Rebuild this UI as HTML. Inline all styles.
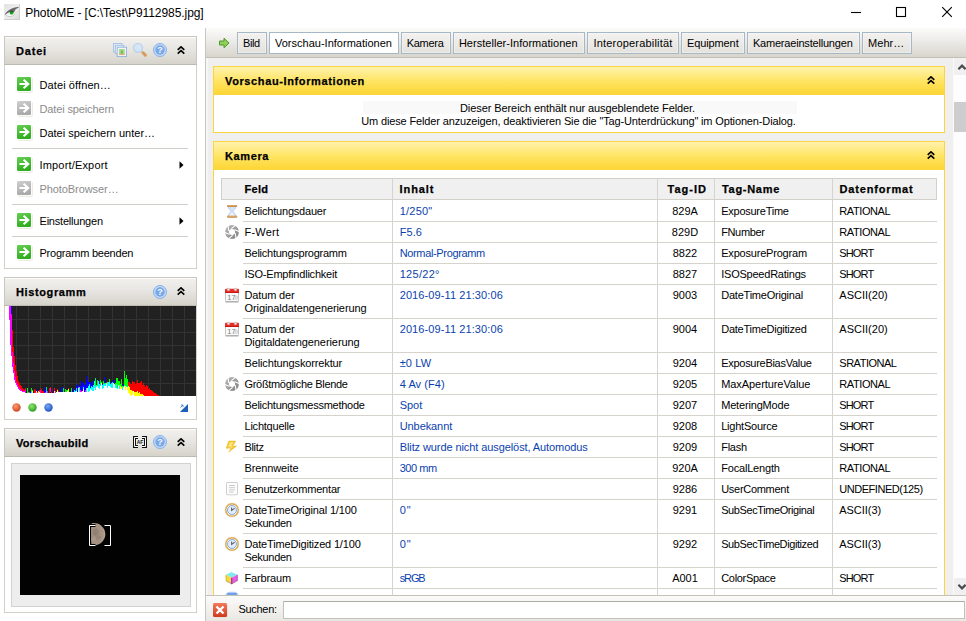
<!DOCTYPE html>
<html lang="de"><head><meta charset="utf-8"><title>PhotoME</title><style>
*{box-sizing:border-box;margin:0;padding:0}
html,body{width:966px;height:621px;overflow:hidden;background:#fff}
body{position:relative;font-family:"Liberation Sans",sans-serif;font-size:11px;color:#000;line-height:13px}
.abs{position:absolute}
.t{position:absolute;white-space:nowrap}
.b{font-weight:bold;-webkit-text-stroke:.25px #000}
#title{left:25.300px;top:5px;font-size:12px;line-height:16px;letter-spacing:-0.07px}
.ph{position:absolute;left:4px;width:193px;height:29px;border:1px solid #c9c6bd;border-bottom-color:#bdbab1;background:linear-gradient(#f2f1ee,#e8e6e2 45%,#d6d3cb);box-shadow:inset 0 1px 0 rgba(255,255,255,.8)}
.ph .t{left:11px;top:8px;font-weight:bold;-webkit-text-stroke:.25px #000}
.pb{position:absolute;left:4px;width:193px;border:1px solid #d3d0c9;border-top:0;background:#fff}
.mi{position:absolute;left:39.500px;white-space:nowrap}
.dis{color:#8c8c8c}
.sep{position:absolute;left:12px;width:176px;height:1px;background:#d0cec8}
#rp{left:205px;top:28px;width:761px;height:593px;background:#efefef;border-left:1px solid #c8c6c0}
#tabbar{left:206px;top:28px;width:760px;height:30px;background:linear-gradient(#fbfbfa,#eeedea 40%,#d8d5cd);border-bottom:1px solid #c2bfb6}
.tab{position:absolute;top:32px;height:22px;border:1px solid #a6b7c5;background:linear-gradient(#f3f2f0,#e4e2dd);box-shadow:inset 0 0 0 1px rgba(255,255,255,.35);text-align:center;line-height:20px;white-space:nowrap}
.tab.act{background:#fff}
.sec{position:absolute;left:213px;width:732px;border:1px solid #fbd43c;border-top:0;background:#fff}
.sech{position:absolute;left:213px;width:732px;height:29px;border:1px solid #fbd53f;background:linear-gradient(#fff2ad,#ffe566 50%,#fdd636);}
.sech .t{left:11px;top:8px;font-weight:bold;-webkit-text-stroke:.25px #000}
#search{left:206px;top:595px;width:760px;height:26px;background:linear-gradient(#fbfbfa,#e9e7e2);border-top:1px solid #c5c2ba}
.hl{position:absolute;height:1px;background:#d6d3cd;left:243px;width:694px}
.vl{position:absolute;width:1px;background:#d6d3cd;top:178px;height:417px}
.c1{left:244.500px}.c2{left:399.700px;color:#0b3fae}.c3{left:657px;width:56px;text-align:center}.c4{left:721.200px}.c5{left:839.300px}
</style></head><body>
<svg class="abs" style="left:4px;top:4px" width="16" height="16" viewBox="0 0 16 16"><defs><linearGradient id="eyebg" x1="0" y1="0" x2="1" y2="1"><stop offset="0" stop-color="#e2e2e2"/><stop offset=".5" stop-color="#eeeeee"/><stop offset="1" stop-color="#d9d9d9"/></linearGradient></defs><rect width="16" height="16" fill="url(#eyebg)"/><path d="M15.500 0V16M0 15.500H16" stroke="#cfcfcf" stroke-width="1"/><path d="M2 10.800C4 12.800,9 13,11.500 9.500C9 10.800,5 11,2 10.800z" fill="#f8f8f8"/><path d="M1.300 10.600C3.500 6.500,8 4.600,14.300 3.600C11.500 4.800,10.500 6.500,10.300 8.500C8 7,4.500 8,1.300 10.600z" fill="#6a6d6a"/><path d="M1.300 10.600C3.500 6.500,8 4.300,14.500 3.500" stroke="#4b4b4b" stroke-width=".9" fill="none"/><path d="M4.500 7.300C7 5,10 4,13.500 3.200" stroke="#8a7a8a" stroke-width=".6" fill="none"/><circle cx="7.600" cy="8.700" r="1.900" fill="#18a818"/><path d="M5.700 8.200A1.900 1.900 0 0 1 9.500 8.200z" fill="#2f5a35"/><path d="M1.500 11C4 13.200,8.500 13.300,11 10" stroke="#bdbdbd" stroke-width=".7" fill="none"/></svg>
<div class="t" id="title">PhotoME - [C:\Test\P9112985.jpg]</div>
<svg class="abs" style="left:840px;top:0" width="126" height="28" viewBox="0 0 126 28"><path d="M11 12.500h10" stroke="#000" stroke-width="1.100"/><rect x="56.500" y="7.500" width="9" height="9" fill="none" stroke="#000" stroke-width="1.100"/><path d="M102.200 7.200l9.600 9.600M111.800 7.200L102.200 16.800" stroke="#000" stroke-width="1.150"/></svg>
<div class="ph" style="top:36px"><div class="t" style="letter-spacing:0.819px">Datei</div></div>
<div class="pb" style="top:65px;height:204px"></div>
<svg class="abs" style="left:113px;top:43px;opacity:.75" width="14" height="14" viewBox="0 0 15 15"><rect x="0.5" y="0.5" width="9" height="9" fill="#e4eefb" stroke="#8fb4e6"/><rect x="2.5" y="2.5" width="9" height="9" fill="#e4eefb" stroke="#8fb4e6"/><rect x="4.5" y="4.5" width="10" height="10" fill="#f3f8ff" stroke="#7aa6e0"/><rect x="6.5" y="6.5" width="6" height="6" fill="#8ed36d"/><rect x="8.5" y="8" width="2" height="4" fill="#4fae36"/><rect x="6.5" y="11.5" width="6" height="1.4" fill="#e8a05a"/></svg>
<svg class="abs" style="left:132px;top:42px;opacity:.85" width="16" height="16" viewBox="0 0 16 16"><path d="M9 9L11 11" stroke="#c9d6e6" stroke-width="2"/><path d="M11 10.800L13.300 13.100" stroke="#d58f48" stroke-width="3" stroke-linecap="round"/><circle cx="6" cy="5.800" r="4.500" fill="#d3e5fa" stroke="#b3cff0" stroke-width="1.300"/></svg>
<svg class="abs" style="left:153px;top:43px" width="14" height="14" viewBox="0 0 14 14"><circle cx="7" cy="7" r="6.5" fill="#c3d8f5" stroke="#86b0ea" stroke-width="1"/><circle cx="7" cy="7" r="4.700" fill="#78a8e6"/><text x="7" y="10.200" font-family="Liberation Sans" font-weight="bold" font-size="9" fill="#f4f8ff" text-anchor="middle">?</text></svg>
<svg class="abs" style="left:177px;top:45.7px" width="8" height="9" viewBox="0 0 8 9"><path d="M0.700 3.900L4 0.800L7.300 3.900M0.700 7.700L4 4.600L7.300 7.700" fill="none" stroke="#000" stroke-width="1.600"/></svg>
<svg class="abs" style="left:16px;top:76px" width="17" height="17" viewBox="0 0 17 17"><defs><linearGradient id="gg76" x1="0" y1="0" x2="0.300" y2="1"><stop offset="0" stop-color="#66cf52"/><stop offset="1" stop-color="#30ad20"/></linearGradient></defs><rect x="1.500" y="1.500" width="15" height="15" rx="1.500" fill="#ddd8cc"/><rect x="1" y="1" width="15" height="15" rx="1" fill="#fbfbf8"/><rect x="1" y="1" width="14" height="14" rx="1.200" fill="url(#gg76)"/><path d="M3.400 8H12M7.600 3.800L12.200 8L7.600 12.200" fill="none" stroke="#fff" stroke-width="2.100"/></svg>
<div class="mi" style="top:79px;letter-spacing:0.1px">Datei öffnen…</div>
<svg class="abs" style="left:16px;top:100px" width="17" height="17" viewBox="0 0 17 17"><defs><linearGradient id="gd100" x1="0" y1="0" x2="0.300" y2="1"><stop offset="0" stop-color="#cfcfcf"/><stop offset="1" stop-color="#a9a9a9"/></linearGradient></defs><rect x="1.500" y="1.500" width="15" height="15" rx="1.500" fill="#ddd8cc"/><rect x="1" y="1" width="15" height="15" rx="1" fill="#fbfbf8"/><rect x="1" y="1" width="14" height="14" rx="1.200" fill="url(#gd100)"/><path d="M3.400 8H12M7.600 3.800L12.200 8L7.600 12.200" fill="none" stroke="#fff" stroke-width="2.100"/></svg>
<div class="mi dis" style="top:103px;letter-spacing:-0.13px">Datei speichern</div>
<svg class="abs" style="left:16px;top:124px" width="17" height="17" viewBox="0 0 17 17"><defs><linearGradient id="gg124" x1="0" y1="0" x2="0.300" y2="1"><stop offset="0" stop-color="#66cf52"/><stop offset="1" stop-color="#30ad20"/></linearGradient></defs><rect x="1.500" y="1.500" width="15" height="15" rx="1.500" fill="#ddd8cc"/><rect x="1" y="1" width="15" height="15" rx="1" fill="#fbfbf8"/><rect x="1" y="1" width="14" height="14" rx="1.200" fill="url(#gg124)"/><path d="M3.400 8H12M7.600 3.800L12.200 8L7.600 12.200" fill="none" stroke="#fff" stroke-width="2.100"/></svg>
<div class="mi" style="top:127px;letter-spacing:0px">Datei speichern unter…</div>
<svg class="abs" style="left:16px;top:156px" width="17" height="17" viewBox="0 0 17 17"><defs><linearGradient id="gg156" x1="0" y1="0" x2="0.300" y2="1"><stop offset="0" stop-color="#66cf52"/><stop offset="1" stop-color="#30ad20"/></linearGradient></defs><rect x="1.500" y="1.500" width="15" height="15" rx="1.500" fill="#ddd8cc"/><rect x="1" y="1" width="15" height="15" rx="1" fill="#fbfbf8"/><rect x="1" y="1" width="14" height="14" rx="1.200" fill="url(#gg156)"/><path d="M3.400 8H12M7.600 3.800L12.200 8L7.600 12.200" fill="none" stroke="#fff" stroke-width="2.100"/></svg>
<div class="mi" style="top:159px;letter-spacing:0.17px">Import/Export</div>
<svg class="abs" style="left:16px;top:180px" width="17" height="17" viewBox="0 0 17 17"><defs><linearGradient id="gd180" x1="0" y1="0" x2="0.300" y2="1"><stop offset="0" stop-color="#cfcfcf"/><stop offset="1" stop-color="#a9a9a9"/></linearGradient></defs><rect x="1.500" y="1.500" width="15" height="15" rx="1.500" fill="#ddd8cc"/><rect x="1" y="1" width="15" height="15" rx="1" fill="#fbfbf8"/><rect x="1" y="1" width="14" height="14" rx="1.200" fill="url(#gd180)"/><path d="M3.400 8H12M7.600 3.800L12.200 8L7.600 12.200" fill="none" stroke="#fff" stroke-width="2.100"/></svg>
<div class="mi dis" style="top:183px;letter-spacing:-0.08px">PhotoBrowser…</div>
<svg class="abs" style="left:16px;top:212px" width="17" height="17" viewBox="0 0 17 17"><defs><linearGradient id="gg212" x1="0" y1="0" x2="0.300" y2="1"><stop offset="0" stop-color="#66cf52"/><stop offset="1" stop-color="#30ad20"/></linearGradient></defs><rect x="1.500" y="1.500" width="15" height="15" rx="1.500" fill="#ddd8cc"/><rect x="1" y="1" width="15" height="15" rx="1" fill="#fbfbf8"/><rect x="1" y="1" width="14" height="14" rx="1.200" fill="url(#gg212)"/><path d="M3.400 8H12M7.600 3.800L12.200 8L7.600 12.200" fill="none" stroke="#fff" stroke-width="2.100"/></svg>
<div class="mi" style="top:215px;letter-spacing:-0.21px">Einstellungen</div>
<svg class="abs" style="left:16px;top:244px" width="17" height="17" viewBox="0 0 17 17"><defs><linearGradient id="gg244" x1="0" y1="0" x2="0.300" y2="1"><stop offset="0" stop-color="#66cf52"/><stop offset="1" stop-color="#30ad20"/></linearGradient></defs><rect x="1.500" y="1.500" width="15" height="15" rx="1.500" fill="#ddd8cc"/><rect x="1" y="1" width="15" height="15" rx="1" fill="#fbfbf8"/><rect x="1" y="1" width="14" height="14" rx="1.200" fill="url(#gg244)"/><path d="M3.400 8H12M7.600 3.800L12.200 8L7.600 12.200" fill="none" stroke="#fff" stroke-width="2.100"/></svg>
<div class="mi" style="top:247px;letter-spacing:-0.22px">Programm beenden</div>
<div class="sep" style="top:148px"></div>
<div class="sep" style="top:204px"></div>
<div class="sep" style="top:236px"></div>
<svg class="abs" style="left:179px;top:161px" width="5" height="8" viewBox="0 0 5 8"><path d="M0.5 0.3L4.5 4L0.5 7.7z" fill="#000"/></svg>
<svg class="abs" style="left:179px;top:217px" width="5" height="8" viewBox="0 0 5 8"><path d="M0.5 0.3L4.5 4L0.5 7.7z" fill="#000"/></svg>
<div class="ph" style="top:277px"><div class="t" style="letter-spacing:0.621px">Histogramm</div></div>
<div class="pb" style="top:306px;height:114px"></div>
<svg class="abs" style="left:153px;top:285px" width="14" height="14" viewBox="0 0 14 14"><circle cx="7" cy="7" r="6.5" fill="#c3d8f5" stroke="#86b0ea" stroke-width="1"/><circle cx="7" cy="7" r="4.700" fill="#78a8e6"/><text x="7" y="10.200" font-family="Liberation Sans" font-weight="bold" font-size="9" fill="#f4f8ff" text-anchor="middle">?</text></svg>
<svg class="abs" style="left:177px;top:286.7px" width="8" height="9" viewBox="0 0 8 9"><path d="M0.700 3.900L4 0.800L7.300 3.900M0.700 7.700L4 4.600L7.300 7.700" fill="none" stroke="#000" stroke-width="1.600"/></svg>
<svg class="abs" style="left:5px;top:306px" width="191" height="90" viewBox="0 0 191 90" shape-rendering="crispEdges"><rect width="191" height="90" fill="#212121"/><path d="M11.5 0V90M23.5 0V90M35.5 0V90M47.5 0V90M59.5 0V90M71.5 0V90M83.5 0V90M95.5 0V90M107.5 0V90M119.5 0V90M131.5 0V90M143.5 0V90M155.5 0V90M167.5 0V90M179.5 0V90M0 13.5H191M0 26.5H191M0 39.5H191M0 52.5H191M0 64.5H191M0 77.5H191" stroke="#333333" stroke-width="1" fill="none"/><rect x="0" y="0.0" width="1" height="90.0" fill="#ffffff"/><rect x="1" y="0.0" width="1" height="90.0" fill="#ffffff"/><rect x="2" y="0.0" width="1" height="90.0" fill="#ffffff"/><rect x="3" y="0.0" width="1" height="90.0" fill="#ffffff"/><rect x="4" y="14.0" width="1" height="76.0" fill="#ffffff"/><rect x="4" y="0.0" width="1" height="14.0" fill="#ff00ff"/><rect x="5" y="39.0" width="1" height="51.0" fill="#ffffff"/><rect x="5" y="0.0" width="1" height="39.0" fill="#ff00ff"/><rect x="6" y="50.0" width="1" height="40.0" fill="#ffffff"/><rect x="6" y="8.4" width="1" height="41.6" fill="#ff00ff"/><rect x="6" y="0.0" width="1" height="8.4" fill="#0000ff"/><rect x="7" y="61.0" width="1" height="29.0" fill="#ffffff"/><rect x="7" y="45.6" width="1" height="15.4" fill="#ff00ff"/><rect x="7" y="24.0" width="1" height="21.6" fill="#ff0000"/><rect x="8" y="67.0" width="1" height="23.0" fill="#ffffff"/><rect x="8" y="56.6" width="1" height="10.4" fill="#ff00ff"/><rect x="8" y="41.2" width="1" height="15.4" fill="#ff0000"/><rect x="9" y="74.0" width="1" height="16.0" fill="#ffffff"/><rect x="9" y="64.6" width="1" height="9.4" fill="#ff00ff"/><rect x="9" y="50.0" width="1" height="14.6" fill="#ff0000"/><rect x="10" y="77.0" width="1" height="13.0" fill="#ffffff"/><rect x="10" y="71.2" width="1" height="5.8" fill="#ff00ff"/><rect x="10" y="58.8" width="1" height="12.4" fill="#ff0000"/><rect x="11" y="79.0" width="1" height="11.0" fill="#ffffff"/><rect x="11" y="75.8" width="1" height="3.2" fill="#ff00ff"/><rect x="11" y="64.6" width="1" height="11.2" fill="#ff0000"/><rect x="12" y="81.0" width="1" height="9.0" fill="#ffffff"/><rect x="12" y="78.2" width="1" height="2.8" fill="#ff00ff"/><rect x="12" y="69.8" width="1" height="8.4" fill="#ff0000"/><rect x="13" y="82.5" width="1" height="7.5" fill="#ffffff"/><rect x="13" y="80.2" width="1" height="2.3" fill="#ff00ff"/><rect x="13" y="74.6" width="1" height="5.6" fill="#ff0000"/><rect x="14" y="83.5" width="1" height="6.5" fill="#ffffff"/><rect x="14" y="81.9" width="1" height="1.6" fill="#ff00ff"/><rect x="14" y="77.0" width="1" height="4.9" fill="#ff0000"/><rect x="15" y="84.5" width="1" height="5.5" fill="#ffffff"/><rect x="15" y="83.1" width="1" height="1.4" fill="#ff00ff"/><rect x="15" y="78.6" width="1" height="4.5" fill="#ff0000"/><rect x="16" y="85.0" width="1" height="5.0" fill="#ffffff"/><rect x="16" y="84.1" width="1" height="0.9" fill="#ff00ff"/><rect x="16" y="80.2" width="1" height="3.9" fill="#ff0000"/><rect x="17" y="85.5" width="1" height="4.5" fill="#ffffff"/><rect x="17" y="84.8" width="1" height="0.7" fill="#ff00ff"/><rect x="17" y="81.6" width="1" height="3.2" fill="#ff0000"/><rect x="18" y="85.8" width="1" height="4.2" fill="#ffffff"/><rect x="18" y="85.3" width="1" height="0.5" fill="#ff00ff"/><rect x="18" y="82.7" width="1" height="2.6" fill="#ff0000"/><rect x="19" y="85.9" width="1" height="4.1" fill="#ffffff"/><rect x="19" y="85.4" width="1" height="0.5" fill="#ff00ff"/><rect x="19" y="83.5" width="1" height="1.9" fill="#ff0000"/><rect x="20" y="86.9" width="1" height="3.1" fill="#ffffff"/><rect x="20" y="83.4" width="1" height="3.5" fill="#ff00ff"/><rect x="20" y="81.6" width="1" height="1.8" fill="#ff0000"/><rect x="21" y="86.9" width="1" height="3.1" fill="#ffffff"/><rect x="22" y="86.8" width="1" height="3.2" fill="#ffffff"/><rect x="22" y="82.3" width="1" height="4.5" fill="#00ff00"/><rect x="23" y="86.8" width="1" height="3.2" fill="#ffffff"/><rect x="23" y="86.7" width="1" height="0.1" fill="#ffff00"/><rect x="23" y="85.9" width="1" height="0.8" fill="#00ff00"/><rect x="24" y="86.8" width="1" height="3.2" fill="#ffffff"/><rect x="24" y="86.3" width="1" height="0.5" fill="#ff00ff"/><rect x="24" y="86.0" width="1" height="0.3" fill="#ff0000"/><rect x="25" y="86.8" width="1" height="3.2" fill="#ffffff"/><rect x="25" y="85.1" width="1" height="1.7" fill="#0000ff"/><rect x="26" y="86.8" width="1" height="3.2" fill="#ffffff"/><rect x="26" y="85.7" width="1" height="1.1" fill="#00ffff"/><rect x="26" y="81.5" width="1" height="4.2" fill="#00ff00"/><rect x="27" y="86.7" width="1" height="3.3" fill="#ffffff"/><rect x="27" y="85.4" width="1" height="1.4" fill="#ffff00"/><rect x="27" y="83.5" width="1" height="1.8" fill="#00ff00"/><rect x="28" y="86.7" width="1" height="3.3" fill="#ffffff"/><rect x="29" y="86.7" width="1" height="3.3" fill="#ffffff"/><rect x="29" y="82.7" width="1" height="4.1" fill="#ff0000"/><rect x="30" y="86.7" width="1" height="3.3" fill="#ffffff"/><rect x="30" y="86.3" width="1" height="0.4" fill="#ff00ff"/><rect x="30" y="84.3" width="1" height="2.0" fill="#ff0000"/><rect x="31" y="86.7" width="1" height="3.3" fill="#ffffff"/><rect x="31" y="85.4" width="1" height="1.3" fill="#ffff00"/><rect x="31" y="84.8" width="1" height="0.6" fill="#00ff00"/><rect x="32" y="86.7" width="1" height="3.3" fill="#ffffff"/><rect x="32" y="86.1" width="1" height="0.6" fill="#ff00ff"/><rect x="32" y="83.0" width="1" height="3.1" fill="#0000ff"/><rect x="33" y="86.7" width="1" height="3.3" fill="#ffffff"/><rect x="33" y="85.1" width="1" height="1.5" fill="#ffff00"/><rect x="33" y="84.7" width="1" height="0.5" fill="#00ff00"/><rect x="34" y="86.2" width="1" height="3.8" fill="#ffffff"/><rect x="34" y="84.6" width="1" height="1.6" fill="#ff00ff"/><rect x="34" y="83.8" width="1" height="0.7" fill="#ff0000"/><rect x="35" y="86.6" width="1" height="3.4" fill="#ffffff"/><rect x="35" y="83.5" width="1" height="3.2" fill="#ff00ff"/><rect x="35" y="81.6" width="1" height="1.8" fill="#ff0000"/><rect x="36" y="86.6" width="1" height="3.4" fill="#ffffff"/><rect x="36" y="83.3" width="1" height="3.3" fill="#ff0000"/><rect x="37" y="86.6" width="1" height="3.4" fill="#ffffff"/><rect x="37" y="85.0" width="1" height="1.6" fill="#ff0000"/><rect x="38" y="86.6" width="1" height="3.4" fill="#ffffff"/><rect x="38" y="84.6" width="1" height="2.0" fill="#ff0000"/><rect x="39" y="86.6" width="1" height="3.4" fill="#ffffff"/><rect x="39" y="84.4" width="1" height="2.1" fill="#0000ff"/><rect x="40" y="86.5" width="1" height="3.5" fill="#ffffff"/><rect x="40" y="86.4" width="1" height="0.2" fill="#ff00ff"/><rect x="40" y="80.8" width="1" height="5.6" fill="#0000ff"/><rect x="41" y="86.5" width="1" height="3.5" fill="#ffffff"/><rect x="41" y="85.2" width="1" height="1.3" fill="#00ffff"/><rect x="41" y="81.3" width="1" height="3.9" fill="#00ff00"/><rect x="42" y="86.5" width="1" height="3.5" fill="#ffffff"/><rect x="42" y="85.3" width="1" height="1.2" fill="#ff00ff"/><rect x="42" y="81.5" width="1" height="3.9" fill="#0000ff"/><rect x="43" y="86.5" width="1" height="3.5" fill="#ffffff"/><rect x="44" y="86.5" width="1" height="3.5" fill="#ffffff"/><rect x="44" y="82.0" width="1" height="4.5" fill="#ff0000"/><rect x="45" y="86.5" width="1" height="3.5" fill="#ffffff"/><rect x="45" y="82.1" width="1" height="4.3" fill="#ff00ff"/><rect x="45" y="80.7" width="1" height="1.5" fill="#ff0000"/><rect x="46" y="86.5" width="1" height="3.5" fill="#ffffff"/><rect x="46" y="85.7" width="1" height="0.8" fill="#ff0000"/><rect x="47" y="86.5" width="1" height="3.5" fill="#ffffff"/><rect x="47" y="85.7" width="1" height="0.8" fill="#0000ff"/><rect x="48" y="86.5" width="1" height="3.5" fill="#ffffff"/><rect x="49" y="86.4" width="1" height="3.6" fill="#ffffff"/><rect x="49" y="85.1" width="1" height="1.4" fill="#ffff00"/><rect x="49" y="81.5" width="1" height="3.6" fill="#ff0000"/><rect x="50" y="86.4" width="1" height="3.6" fill="#ffffff"/><rect x="50" y="84.9" width="1" height="1.6" fill="#ff00ff"/><rect x="50" y="84.3" width="1" height="0.6" fill="#0000ff"/><rect x="51" y="86.4" width="1" height="3.6" fill="#ffffff"/><rect x="52" y="86.4" width="1" height="3.6" fill="#ffffff"/><rect x="52" y="84.0" width="1" height="2.4" fill="#ffff00"/><rect x="52" y="83.3" width="1" height="0.7" fill="#ff0000"/><rect x="53" y="86.4" width="1" height="3.6" fill="#ffffff"/><rect x="53" y="85.4" width="1" height="1.0" fill="#ff0000"/><rect x="54" y="86.4" width="1" height="3.6" fill="#ffffff"/><rect x="54" y="84.9" width="1" height="1.5" fill="#0000ff"/><rect x="55" y="86.4" width="1" height="3.6" fill="#ffffff"/><rect x="55" y="80.9" width="1" height="5.5" fill="#0000ff"/><rect x="56" y="86.4" width="1" height="3.6" fill="#ffffff"/><rect x="57" y="86.4" width="1" height="3.6" fill="#ffffff"/><rect x="57" y="80.7" width="1" height="5.7" fill="#0000ff"/><rect x="58" y="86.4" width="1" height="3.6" fill="#ffffff"/><rect x="58" y="85.7" width="1" height="0.7" fill="#00ffff"/><rect x="58" y="81.8" width="1" height="3.9" fill="#00ff00"/><rect x="59" y="86.4" width="1" height="3.6" fill="#ffffff"/><rect x="59" y="86.0" width="1" height="0.4" fill="#ff0000"/><rect x="60" y="86.4" width="1" height="3.6" fill="#ffffff"/><rect x="60" y="82.8" width="1" height="3.6" fill="#00ff00"/><rect x="61" y="86.4" width="1" height="3.6" fill="#ffffff"/><rect x="61" y="84.2" width="1" height="2.2" fill="#00ff00"/><rect x="62" y="85.4" width="1" height="4.6" fill="#ffffff"/><rect x="62" y="85.2" width="1" height="0.2" fill="#00ffff"/><rect x="62" y="83.6" width="1" height="1.7" fill="#00ff00"/><rect x="63" y="86.3" width="1" height="3.7" fill="#ffffff"/><rect x="63" y="83.4" width="1" height="2.9" fill="#ffff00"/><rect x="63" y="82.1" width="1" height="1.3" fill="#ff0000"/><rect x="64" y="86.4" width="1" height="3.6" fill="#ffffff"/><rect x="65" y="86.4" width="1" height="3.6" fill="#ffffff"/><rect x="65" y="85.8" width="1" height="0.6" fill="#ff00ff"/><rect x="65" y="84.8" width="1" height="1.0" fill="#0000ff"/><rect x="66" y="86.4" width="1" height="3.6" fill="#ffffff"/><rect x="66" y="81.9" width="1" height="4.5" fill="#00ff00"/><rect x="67" y="86.4" width="1" height="3.6" fill="#ffffff"/><rect x="67" y="85.9" width="1" height="0.5" fill="#00ffff"/><rect x="67" y="82.3" width="1" height="3.6" fill="#0000ff"/><rect x="68" y="86.4" width="1" height="3.6" fill="#ffffff"/><rect x="69" y="86.4" width="1" height="3.6" fill="#ffffff"/><rect x="69" y="84.3" width="1" height="2.1" fill="#00ffff"/><rect x="69" y="83.9" width="1" height="0.4" fill="#00ff00"/><rect x="70" y="86.4" width="1" height="3.6" fill="#ffffff"/><rect x="70" y="85.1" width="1" height="1.3" fill="#00ffff"/><rect x="70" y="82.9" width="1" height="2.2" fill="#0000ff"/><rect x="71" y="84.5" width="1" height="5.5" fill="#ffffff"/><rect x="71" y="82.2" width="1" height="2.3" fill="#00ffff"/><rect x="71" y="79.8" width="1" height="2.4" fill="#0000ff"/><rect x="72" y="86.4" width="1" height="3.6" fill="#ffffff"/><rect x="72" y="86.3" width="1" height="0.1" fill="#ff00ff"/><rect x="72" y="78.3" width="1" height="8.0" fill="#0000ff"/><rect x="73" y="81.9" width="1" height="8.1" fill="#ffffff"/><rect x="73" y="81.0" width="1" height="0.9" fill="#ff00ff"/><rect x="73" y="80.8" width="1" height="0.2" fill="#ff0000"/><rect x="74" y="86.3" width="1" height="3.7" fill="#ffffff"/><rect x="74" y="80.9" width="1" height="5.4" fill="#00ffff"/><rect x="74" y="79.4" width="1" height="1.6" fill="#0000ff"/><rect x="75" y="86.0" width="1" height="4.0" fill="#ffffff"/><rect x="75" y="83.9" width="1" height="2.1" fill="#ff00ff"/><rect x="75" y="79.7" width="1" height="4.2" fill="#0000ff"/><rect x="76" y="86.3" width="1" height="3.7" fill="#ffffff"/><rect x="76" y="85.3" width="1" height="1.0" fill="#ff00ff"/><rect x="76" y="75.1" width="1" height="10.2" fill="#0000ff"/><rect x="77" y="85.4" width="1" height="4.6" fill="#ffffff"/><rect x="77" y="84.5" width="1" height="0.9" fill="#ff00ff"/><rect x="77" y="76.5" width="1" height="8.0" fill="#0000ff"/><rect x="78" y="82.9" width="1" height="7.1" fill="#ffffff"/><rect x="78" y="80.9" width="1" height="2.0" fill="#00ffff"/><rect x="78" y="75.9" width="1" height="5.0" fill="#0000ff"/><rect x="79" y="86.1" width="1" height="3.9" fill="#ffffff"/><rect x="79" y="79.0" width="1" height="7.2" fill="#0000ff"/><rect x="80" y="85.9" width="1" height="4.1" fill="#ffffff"/><rect x="80" y="83.7" width="1" height="2.3" fill="#ff00ff"/><rect x="80" y="78.0" width="1" height="5.6" fill="#0000ff"/><rect x="81" y="86.0" width="1" height="4.0" fill="#ffffff"/><rect x="81" y="81.9" width="1" height="4.1" fill="#00ffff"/><rect x="81" y="70.2" width="1" height="11.7" fill="#0000ff"/><rect x="82" y="82.0" width="1" height="8.0" fill="#ffffff"/><rect x="82" y="81.8" width="1" height="0.2" fill="#00ffff"/><rect x="82" y="74.3" width="1" height="7.5" fill="#0000ff"/><rect x="83" y="85.8" width="1" height="4.2" fill="#ffffff"/><rect x="83" y="79.5" width="1" height="6.3" fill="#00ffff"/><rect x="83" y="76.3" width="1" height="3.2" fill="#0000ff"/><rect x="84" y="85.4" width="1" height="4.6" fill="#ffffff"/><rect x="84" y="77.6" width="1" height="7.8" fill="#00ffff"/><rect x="84" y="75.8" width="1" height="1.8" fill="#0000ff"/><rect x="85" y="82.5" width="1" height="7.5" fill="#ffffff"/><rect x="85" y="81.7" width="1" height="0.8" fill="#00ffff"/><rect x="85" y="76.2" width="1" height="5.5" fill="#0000ff"/><rect x="86" y="83.8" width="1" height="6.2" fill="#ffffff"/><rect x="86" y="79.8" width="1" height="4.0" fill="#00ffff"/><rect x="86" y="76.8" width="1" height="3.0" fill="#0000ff"/><rect x="87" y="85.1" width="1" height="4.9" fill="#ffffff"/><rect x="87" y="80.6" width="1" height="4.5" fill="#00ffff"/><rect x="87" y="74.7" width="1" height="5.9" fill="#0000ff"/><rect x="88" y="84.9" width="1" height="5.1" fill="#ffffff"/><rect x="88" y="78.6" width="1" height="6.3" fill="#00ffff"/><rect x="88" y="78.5" width="1" height="0.1" fill="#0000ff"/><rect x="89" y="81.6" width="1" height="8.4" fill="#ffffff"/><rect x="89" y="74.9" width="1" height="6.7" fill="#00ffff"/><rect x="89" y="73.2" width="1" height="1.6" fill="#0000ff"/><rect x="90" y="84.4" width="1" height="5.6" fill="#ffffff"/><rect x="90" y="79.7" width="1" height="4.7" fill="#00ffff"/><rect x="90" y="71.8" width="1" height="7.9" fill="#00ff00"/><rect x="91" y="80.7" width="1" height="9.3" fill="#ffffff"/><rect x="91" y="79.0" width="1" height="1.7" fill="#00ffff"/><rect x="91" y="78.6" width="1" height="0.4" fill="#00ff00"/><rect x="92" y="79.9" width="1" height="10.1" fill="#ffffff"/><rect x="92" y="79.7" width="1" height="0.2" fill="#ffff00"/><rect x="92" y="73.5" width="1" height="6.2" fill="#00ff00"/><rect x="93" y="81.8" width="1" height="8.2" fill="#ffffff"/><rect x="93" y="75.2" width="1" height="6.6" fill="#00ffff"/><rect x="93" y="73.6" width="1" height="1.7" fill="#0000ff"/><rect x="94" y="83.3" width="1" height="6.7" fill="#ffffff"/><rect x="94" y="78.3" width="1" height="5.1" fill="#00ffff"/><rect x="94" y="76.1" width="1" height="2.2" fill="#0000ff"/><rect x="95" y="79.5" width="1" height="10.5" fill="#ffffff"/><rect x="95" y="79.4" width="1" height="0.1" fill="#00ffff"/><rect x="95" y="73.9" width="1" height="5.5" fill="#00ff00"/><rect x="96" y="77.2" width="1" height="12.8" fill="#ffffff"/><rect x="96" y="76.5" width="1" height="0.7" fill="#00ffff"/><rect x="96" y="75.5" width="1" height="1.0" fill="#00ff00"/><rect x="97" y="82.5" width="1" height="7.5" fill="#ffffff"/><rect x="97" y="78.8" width="1" height="3.7" fill="#00ffff"/><rect x="97" y="77.8" width="1" height="1.0" fill="#0000ff"/><rect x="98" y="82.3" width="1" height="7.7" fill="#ffffff"/><rect x="98" y="78.4" width="1" height="3.9" fill="#00ffff"/><rect x="98" y="74.7" width="1" height="3.6" fill="#00ff00"/><rect x="99" y="80.0" width="1" height="10.0" fill="#ffffff"/><rect x="99" y="77.9" width="1" height="2.1" fill="#00ffff"/><rect x="99" y="77.4" width="1" height="0.5" fill="#00ff00"/><rect x="100" y="79.5" width="1" height="10.5" fill="#ffffff"/><rect x="100" y="76.6" width="1" height="2.9" fill="#00ffff"/><rect x="100" y="71.2" width="1" height="5.4" fill="#0000ff"/><rect x="101" y="78.0" width="1" height="12.0" fill="#ffffff"/><rect x="101" y="77.1" width="1" height="0.9" fill="#ffff00"/><rect x="101" y="75.7" width="1" height="1.3" fill="#ff0000"/><rect x="102" y="81.6" width="1" height="8.4" fill="#ffffff"/><rect x="102" y="76.0" width="1" height="5.6" fill="#00ffff"/><rect x="102" y="75.5" width="1" height="0.5" fill="#0000ff"/><rect x="103" y="79.5" width="1" height="10.5" fill="#ffffff"/><rect x="103" y="76.4" width="1" height="3.1" fill="#00ffff"/><rect x="103" y="75.5" width="1" height="0.9" fill="#00ff00"/><rect x="104" y="80.2" width="1" height="9.8" fill="#ffffff"/><rect x="104" y="76.3" width="1" height="3.8" fill="#00ffff"/><rect x="104" y="73.2" width="1" height="3.1" fill="#00ff00"/><rect x="105" y="81.3" width="1" height="8.7" fill="#ffffff"/><rect x="105" y="78.0" width="1" height="3.4" fill="#00ffff"/><rect x="105" y="77.8" width="1" height="0.2" fill="#0000ff"/><rect x="106" y="81.5" width="1" height="8.5" fill="#ffffff"/><rect x="106" y="77.4" width="1" height="4.1" fill="#00ffff"/><rect x="106" y="75.9" width="1" height="1.4" fill="#0000ff"/><rect x="107" y="81.6" width="1" height="8.4" fill="#ffffff"/><rect x="107" y="75.9" width="1" height="5.7" fill="#00ffff"/><rect x="107" y="74.4" width="1" height="1.5" fill="#0000ff"/><rect x="108" y="77.2" width="1" height="12.8" fill="#ffffff"/><rect x="108" y="77.0" width="1" height="0.2" fill="#ff00ff"/><rect x="108" y="75.5" width="1" height="1.5" fill="#0000ff"/><rect x="109" y="77.7" width="1" height="12.3" fill="#ffffff"/><rect x="109" y="77.5" width="1" height="0.2" fill="#00ffff"/><rect x="109" y="74.0" width="1" height="3.4" fill="#0000ff"/><rect x="110" y="82.0" width="1" height="8.0" fill="#ffffff"/><rect x="110" y="78.8" width="1" height="3.1" fill="#00ffff"/><rect x="110" y="76.6" width="1" height="2.2" fill="#00ff00"/><rect x="111" y="82.3" width="1" height="7.7" fill="#ffffff"/><rect x="111" y="78.4" width="1" height="3.9" fill="#00ffff"/><rect x="111" y="72.2" width="1" height="6.2" fill="#00ff00"/><rect x="112" y="82.5" width="1" height="7.5" fill="#ffffff"/><rect x="112" y="82.3" width="1" height="0.2" fill="#00ffff"/><rect x="112" y="72.2" width="1" height="10.1" fill="#00ff00"/><rect x="113" y="79.8" width="1" height="10.2" fill="#ffffff"/><rect x="113" y="78.7" width="1" height="1.1" fill="#ffff00"/><rect x="113" y="75.4" width="1" height="3.3" fill="#00ff00"/><rect x="114" y="83.1" width="1" height="6.9" fill="#ffffff"/><rect x="114" y="78.5" width="1" height="4.6" fill="#00ffff"/><rect x="114" y="74.5" width="1" height="4.0" fill="#00ff00"/><rect x="115" y="83.4" width="1" height="6.6" fill="#ffffff"/><rect x="115" y="80.4" width="1" height="3.0" fill="#ffff00"/><rect x="115" y="78.1" width="1" height="2.3" fill="#00ff00"/><rect x="116" y="83.4" width="1" height="6.6" fill="#ffffff"/><rect x="116" y="81.3" width="1" height="2.0" fill="#ffff00"/><rect x="116" y="73.3" width="1" height="8.1" fill="#00ff00"/><rect x="117" y="84.0" width="1" height="6.0" fill="#ffffff"/><rect x="117" y="79.8" width="1" height="4.2" fill="#00ffff"/><rect x="117" y="78.4" width="1" height="1.3" fill="#0000ff"/><rect x="118" y="82.0" width="1" height="8.0" fill="#ffffff"/><rect x="118" y="80.7" width="1" height="1.4" fill="#ffff00"/><rect x="118" y="79.5" width="1" height="1.2" fill="#00ff00"/><rect x="119" y="79.8" width="1" height="10.2" fill="#ffffff"/><rect x="119" y="78.8" width="1" height="1.0" fill="#00ffff"/><rect x="119" y="65.1" width="1" height="13.7" fill="#00ff00"/><rect x="120" y="83.7" width="1" height="6.3" fill="#ffffff"/><rect x="120" y="79.9" width="1" height="3.8" fill="#ffff00"/><rect x="120" y="71.7" width="1" height="8.3" fill="#00ff00"/><rect x="121" y="80.6" width="1" height="9.4" fill="#ffffff"/><rect x="121" y="79.6" width="1" height="0.9" fill="#00ffff"/><rect x="121" y="68.9" width="1" height="10.8" fill="#00ff00"/><rect x="122" y="83.5" width="1" height="6.5" fill="#ffffff"/><rect x="122" y="80.8" width="1" height="2.7" fill="#ffff00"/><rect x="122" y="72.9" width="1" height="7.9" fill="#00ff00"/><rect x="123" y="86.5" width="1" height="3.5" fill="#ffffff"/><rect x="123" y="80.2" width="1" height="6.3" fill="#ffff00"/><rect x="123" y="75.9" width="1" height="4.4" fill="#ff0000"/><rect x="124" y="87.7" width="1" height="2.3" fill="#ffffff"/><rect x="124" y="81.1" width="1" height="6.6" fill="#ffff00"/><rect x="124" y="76.4" width="1" height="4.7" fill="#ff0000"/><rect x="125" y="88.8" width="1" height="1.2" fill="#ffffff"/><rect x="125" y="83.9" width="1" height="4.9" fill="#ffff00"/><rect x="125" y="77.7" width="1" height="6.2" fill="#ff0000"/><rect x="126" y="89.8" width="1" height="0.2" fill="#ffffff"/><rect x="126" y="84.3" width="1" height="5.6" fill="#ffff00"/><rect x="126" y="77.6" width="1" height="6.7" fill="#ff0000"/><rect x="127" y="88.6" width="1" height="1.4" fill="#ffffff"/><rect x="127" y="84.7" width="1" height="3.9" fill="#ffff00"/><rect x="127" y="74.6" width="1" height="10.1" fill="#ff0000"/><rect x="128" y="85.1" width="1" height="4.9" fill="#ffffff"/><rect x="128" y="85.0" width="1" height="0.1" fill="#ff00ff"/><rect x="128" y="76.1" width="1" height="8.8" fill="#ff0000"/><rect x="129" y="85.5" width="1" height="4.5" fill="#ffff00"/><rect x="129" y="76.4" width="1" height="9.1" fill="#ff0000"/><rect x="130" y="85.9" width="1" height="4.1" fill="#ffff00"/><rect x="130" y="77.5" width="1" height="8.4" fill="#ff0000"/><rect x="131" y="89.8" width="1" height="0.2" fill="#ffffff"/><rect x="131" y="86.3" width="1" height="3.4" fill="#ffff00"/><rect x="131" y="77.1" width="1" height="9.3" fill="#ff0000"/><rect x="132" y="84.9" width="1" height="5.1" fill="#ffff00"/><rect x="132" y="74.1" width="1" height="10.8" fill="#ff0000"/><rect x="133" y="87.1" width="1" height="2.9" fill="#ffff00"/><rect x="133" y="77.0" width="1" height="10.2" fill="#ff0000"/><rect x="134" y="86.4" width="1" height="3.6" fill="#ffff00"/><rect x="134" y="77.1" width="1" height="9.3" fill="#ff0000"/><rect x="135" y="88.0" width="1" height="2.0" fill="#ffff00"/><rect x="135" y="76.0" width="1" height="12.0" fill="#ff0000"/><rect x="136" y="88.4" width="1" height="1.6" fill="#ffff00"/><rect x="136" y="74.9" width="1" height="13.5" fill="#ff0000"/><rect x="137" y="88.0" width="1" height="2.0" fill="#ffff00"/><rect x="137" y="79.0" width="1" height="9.1" fill="#ff0000"/><rect x="138" y="89.2" width="1" height="0.8" fill="#ffff00"/><rect x="138" y="76.9" width="1" height="12.3" fill="#ff0000"/><rect x="139" y="89.6" width="1" height="0.4" fill="#ffff00"/><rect x="139" y="78.7" width="1" height="10.9" fill="#ff0000"/><rect x="140" y="81.2" width="1" height="8.8" fill="#ff0000"/><rect x="141" y="79.0" width="1" height="11.0" fill="#ff0000"/><rect x="142" y="80.3" width="1" height="9.7" fill="#ff0000"/><rect x="143" y="82.9" width="1" height="7.1" fill="#ff0000"/><rect x="144" y="82.2" width="1" height="7.8" fill="#ff0000"/><rect x="145" y="84.3" width="1" height="5.7" fill="#ff0000"/><rect x="146" y="84.3" width="1" height="5.7" fill="#ff0000"/><rect x="147" y="85.4" width="1" height="4.6" fill="#ff0000"/><rect x="148" y="86.2" width="1" height="3.8" fill="#ff0000"/><rect x="149" y="86.9" width="1" height="3.1" fill="#ff0000"/><rect x="150" y="86.6" width="1" height="3.4" fill="#ff0000"/><rect x="151" y="87.5" width="1" height="2.5" fill="#ff0000"/><rect x="152" y="88.8" width="1" height="1.2" fill="#ff0000"/><rect x="153" y="89.4" width="1" height="0.6" fill="#ff0000"/></svg>
<svg class="abs" style="left:12px;top:403px" width="9" height="9" viewBox="0 0 9 9"><defs><radialGradient id="d12" cx=".4" cy=".35" r=".7"><stop offset="0" stop-color="#ff9a70"/><stop offset="1" stop-color="#c9421c"/></radialGradient></defs><circle cx="4.5" cy="4.5" r="4.2" fill="url(#d12)"/></svg>
<svg class="abs" style="left:28px;top:403px" width="9" height="9" viewBox="0 0 9 9"><defs><radialGradient id="d28" cx=".4" cy=".35" r=".7"><stop offset="0" stop-color="#8be870"/><stop offset="1" stop-color="#2a9a1c"/></radialGradient></defs><circle cx="4.5" cy="4.5" r="4.2" fill="url(#d28)"/></svg>
<svg class="abs" style="left:44px;top:403px" width="9" height="9" viewBox="0 0 9 9"><defs><radialGradient id="d44" cx=".4" cy=".35" r=".7"><stop offset="0" stop-color="#7aa6f5"/><stop offset="1" stop-color="#1c4fc0"/></radialGradient></defs><circle cx="4.5" cy="4.5" r="4.2" fill="url(#d44)"/></svg>
<svg class="abs" style="left:180px;top:404px" width="8" height="8" viewBox="0 0 8 8"><path d="M0 8L8 0V8z" fill="#1d5fb8"/><path d="M0.5 3.5L3 1M3 1H1M3 1V3" stroke="#4b8de0" stroke-width="1" fill="none"/></svg>
<div class="ph" style="top:428px"><div class="t" style="letter-spacing:0.294px">Vorschaubild</div></div>
<div class="pb" style="top:457px;height:156px"></div>
<svg class="abs" style="left:133px;top:436px" width="14" height="12" viewBox="0 0 14 12"><path d="M5 1.500H1.500V10.500H5M9 1.500H12.500V10.500H9" fill="none" stroke="#111" stroke-width="3"/><path d="M5 1.500H1.500V10.500H5M9 1.500H12.500V10.500H9" fill="none" stroke="#fff" stroke-width="1"/><rect x="3.500" y="3.500" width="7" height="5" fill="#f2f2f0"/><text x="7" y="8" font-size="5" font-family="Liberation Sans" font-weight="bold" fill="#111" text-anchor="middle">AF</text></svg>
<svg class="abs" style="left:153px;top:435px" width="14" height="14" viewBox="0 0 14 14"><circle cx="7" cy="7" r="6.5" fill="#c3d8f5" stroke="#86b0ea" stroke-width="1"/><circle cx="7" cy="7" r="4.700" fill="#78a8e6"/><text x="7" y="10.200" font-family="Liberation Sans" font-weight="bold" font-size="9" fill="#f4f8ff" text-anchor="middle">?</text></svg>
<svg class="abs" style="left:177px;top:437.7px" width="8" height="9" viewBox="0 0 8 9"><path d="M0.700 3.900L4 0.800L7.300 3.900M0.700 7.700L4 4.600L7.300 7.700" fill="none" stroke="#000" stroke-width="1.600"/></svg>
<div class="abs" style="left:11px;top:463px;width:180px;height:144px;background:#ededed;border:1px solid #d2d2d2"></div>
<div class="abs" style="left:20px;top:475px;width:160px;height:120px;background:#030203"></div>
<svg class="abs" style="left:86px;top:520px" width="28" height="28" viewBox="0 0 28 28"><defs><radialGradient id="moon" cx=".25" cy=".5" r=".85"><stop offset="0" stop-color="#9a8778"/><stop offset=".7" stop-color="#a79585"/><stop offset="1" stop-color="#c9bbab"/></radialGradient></defs><path d="M5.500 3.500C8 2.700,12 3,15 5.500C18 8,19.300 11,19.300 14.300C19.300 17.500,18 20.500,15 23C12 25.300,8 25.600,5.500 25C5 21,4.800 18,4.800 14.300S5 7,5.500 3.500z" fill="url(#moon)"/><ellipse cx="10" cy="12" rx="3" ry="3.500" fill="#85736a" opacity=".45"/><ellipse cx="12.500" cy="17.500" rx="2.500" ry="2" fill="#85736a" opacity=".35"/><ellipse cx="8" cy="19" rx="2" ry="2.500" fill="#b8a898" opacity=".4"/><path d="M9.500 5.500H3.500V25.500H9.500M18.500 5.500H24.500V25.500H18.500" fill="none" stroke="#000" stroke-width="3"/><path d="M9.500 5.500H3.500V25.500H9.500M18.500 5.500H24.500V25.500H18.500" fill="none" stroke="#fff" stroke-width="1"/></svg>
<div class="abs" id="rp"></div>
<div class="abs" style="left:206px;top:58px;width:2px;height:537px;background:#f6f6f6"></div>
<div class="abs" id="tabbar"></div>
<svg class="abs" style="left:218px;top:37px" width="12" height="12" viewBox="0 0 12 12"><path d="M1.500 4H6V1.200L11 6L6 10.800V8H1.500z" fill="#8fcf5a" stroke="#4f9a2a" stroke-width="1"/></svg>
<div class="tab" style="left:237px;width:30px;text-align:left;padding-left:5.1px;letter-spacing:-0.436px">Bild</div>
<div class="tab act" style="left:269px;width:130px;text-align:left;padding-left:5.0px;letter-spacing:0.009px">Vorschau-Informationen</div>
<div class="tab" style="left:401px;width:50px;text-align:left;padding-left:4.7px;letter-spacing:-0.289px">Kamera</div>
<div class="tab" style="left:453px;width:132px;text-align:left;padding-left:4.9px;letter-spacing:0.029px">Hersteller-Informationen</div>
<div class="tab" style="left:587px;width:92px;text-align:left;padding-left:5.5px;letter-spacing:0.187px">Interoperabilität</div>
<div class="tab" style="left:681px;width:64px;text-align:left;padding-left:4.9px;letter-spacing:-0.099px">Equipment</div>
<div class="tab" style="left:747px;width:113px;text-align:left;padding-left:4.9px;letter-spacing:-0.193px">Kameraeinstellungen</div>
<div class="tab" style="left:862px;width:50px;text-align:left;padding-left:5.0px;letter-spacing:0.067px">Mehr…</div>
<div class="sec" style="top:95px;height:38px"></div>
<div class="sech" style="top:66px"><div class="t" style="letter-spacing:0.618px">Vorschau-Informationen</div></div>
<svg class="abs" style="left:926.5px;top:76.2px" width="8" height="9" viewBox="0 0 8 9"><path d="M0.700 3.900L4 0.800L7.300 3.900M0.700 7.700L4 4.600L7.300 7.700" fill="none" stroke="#000" stroke-width="1.600"/></svg>
<div class="sec" style="top:170px;height:440px"></div>
<div class="sech" style="top:141px"><div class="t" style="letter-spacing:0.623px">Kamera</div></div>
<svg class="abs" style="left:926.5px;top:151.2px" width="8" height="9" viewBox="0 0 8 9"><path d="M0.700 3.900L4 0.800L7.300 3.900M0.700 7.700L4 4.600L7.300 7.700" fill="none" stroke="#000" stroke-width="1.600"/></svg>
<div class="abs" style="left:221px;top:178px;width:716px;height:22px;background:#f0f0f0;border:1px solid #d3d0ca"></div>
<div class="vl" style="left:392px"></div>
<div class="vl" style="left:657px"></div>
<div class="vl" style="left:714px"></div>
<div class="vl" style="left:832px"></div>
<div class="t b" style="left:244.4px;top:183px;letter-spacing:0.344px">Feld</div>
<div class="t b" style="left:399.6px;top:183px;letter-spacing:0.893px">Inhalt</div>
<div class="t b" style="left:667.5px;top:183px;letter-spacing:1.016px">Tag-ID</div>
<div class="t b" style="left:722.0px;top:183px;letter-spacing:0.703px">Tag-Name</div>
<div class="t b" style="left:839.5px;top:183px;letter-spacing:0.837px">Datenformat</div>
<svg class="abs" style="left:224px;top:203px" width="16" height="16" viewBox="0 0 16 16"><path d="M4 3C4 6,7 7,7 8.300S4 10.500,4 13.500H12C12 10.500,9 9.600,9 8.300S12 6,12 3z" fill="#d3e4f8" stroke="#a9c6ee" stroke-width=".8"/><path d="M5.500 12.800C6 11,7.500 10.500,8 9.500C8.500 10.500,10 11,10.500 12.800z" fill="#f4f6fa"/><rect x="3" y="2" width="10.300" height="2" rx="1" fill="#c98b48"/><rect x="3" y="12.700" width="10.300" height="2" rx="1" fill="#c98b48"/><path d="M3.500 2.600h9.300M3.500 13.300h9.300" stroke="#e6b777" stroke-width=".7"/></svg>
<div class="t c1" style="top:205px;letter-spacing:-0.207px">Belichtungsdauer</div>
<div class="t c2" style="top:205px;letter-spacing:0.227px">1/250"</div>
<div class="t c3" style="top:205px">829A</div>
<div class="t c4" style="top:205px;letter-spacing:-0.251px">ExposureTime</div>
<div class="t c5" style="top:205px;letter-spacing:-0.413px">RATIONAL</div>
<div class="hl" style="top:221px"></div>
<svg class="abs" style="left:224px;top:224px" width="16" height="16" viewBox="0 0 16 16"><defs><linearGradient id="apg" x1="0" y1="0" x2="1" y2="1"><stop offset="0" stop-color="#bdbdbd"/><stop offset="1" stop-color="#7e7e7e"/></linearGradient></defs><circle cx="8" cy="8" r="6.900" fill="url(#apg)"/><polygon points="11.19,9.16 8.59,11.35 5.40,10.19 4.81,6.84 7.41,4.65 10.60,5.81" fill="#fff"/><path d="M11.19 9.16L12.15 14.58M8.59 11.35L4.38 14.88M5.40 10.19L0.23 8.30M4.81 6.84L3.85 1.42M7.41 4.65L11.62 1.12M10.60 5.81L15.77 7.70" stroke="#fff" stroke-width="1.100" fill="none"/></svg>
<div class="t c1" style="top:226px;letter-spacing:0.216px">F-Wert</div>
<div class="t c2" style="top:226px;letter-spacing:0.071px">F5.6</div>
<div class="t c3" style="top:226px">829D</div>
<div class="t c4" style="top:226px;letter-spacing:-0.363px">FNumber</div>
<div class="t c5" style="top:226px;letter-spacing:-0.413px">RATIONAL</div>
<div class="hl" style="top:242px"></div>
<div class="t c1" style="top:247px;letter-spacing:-0.258px">Belichtungsprogramm</div>
<div class="t c2" style="top:247px;letter-spacing:-0.351px">Normal-Programm</div>
<div class="t c3" style="top:247px">8822</div>
<div class="t c4" style="top:247px;letter-spacing:-0.197px">ExposureProgram</div>
<div class="t c5" style="top:247px;letter-spacing:-0.862px">SHORT</div>
<div class="hl" style="top:263px"></div>
<div class="t c1" style="top:268px;letter-spacing:-0.210px">ISO-Empfindlichkeit</div>
<div class="t c2" style="top:268px;letter-spacing:0.293px">125/22°</div>
<div class="t c3" style="top:268px">8827</div>
<div class="t c4" style="top:268px;letter-spacing:-0.224px">ISOSpeedRatings</div>
<div class="t c5" style="top:268px;letter-spacing:-0.862px">SHORT</div>
<div class="hl" style="top:284px"></div>
<svg class="abs" style="left:224px;top:287px" width="16" height="16" viewBox="0 0 16 16"><g transform="translate(0,1)"><rect x="1.500" y="1.500" width="13" height="12" rx="1" fill="#fafafa" stroke="#c4c4c4"/><path d="M1.500 13.800h13" stroke="#adadad" stroke-width="1.400"/><path d="M1 1.800Q1 0.800 2 0.800H14Q15 0.800 15 1.800V5H1z" fill="#ea2a24"/><path d="M1 4.500H15" stroke="#c41712" stroke-width="1"/><circle cx="4.500" cy="1.500" r="1.300" fill="#e4e4e4" stroke="#b9a9a9" stroke-width=".6"/><circle cx="11.500" cy="1.500" r="1.300" fill="#e4e4e4" stroke="#b9a9a9" stroke-width=".6"/><text x="7.500" y="11.800" font-size="7.500" font-family="Liberation Sans" fill="#7c7c7c" text-anchor="middle">17</text><rect x="11" y="8" width="2.500" height="3.500" fill="#e2e2e2" stroke="#c9c9c9" stroke-width=".5"/></g></svg>
<div class="t c1" style="top:289px;letter-spacing:-0.140px">Datum der</div>
<div class="t c1" style="top:302px;letter-spacing:-0.086px">Originaldatengenerierung</div>
<div class="t c2" style="top:289px;letter-spacing:0.099px">2016-09-11 21:30:06</div>
<div class="t c3" style="top:289px">9003</div>
<div class="t c4" style="top:289px;letter-spacing:-0.218px">DateTimeOriginal</div>
<div class="t c5" style="top:289px;letter-spacing:0.011px">ASCII(20)</div>
<div class="hl" style="top:318px"></div>
<svg class="abs" style="left:224px;top:321px" width="16" height="16" viewBox="0 0 16 16"><g transform="translate(0,1)"><rect x="1.500" y="1.500" width="13" height="12" rx="1" fill="#fafafa" stroke="#c4c4c4"/><path d="M1.500 13.800h13" stroke="#adadad" stroke-width="1.400"/><path d="M1 1.800Q1 0.800 2 0.800H14Q15 0.800 15 1.800V5H1z" fill="#ea2a24"/><path d="M1 4.500H15" stroke="#c41712" stroke-width="1"/><circle cx="4.500" cy="1.500" r="1.300" fill="#e4e4e4" stroke="#b9a9a9" stroke-width=".6"/><circle cx="11.500" cy="1.500" r="1.300" fill="#e4e4e4" stroke="#b9a9a9" stroke-width=".6"/><text x="7.500" y="11.800" font-size="7.500" font-family="Liberation Sans" fill="#7c7c7c" text-anchor="middle">17</text><rect x="11" y="8" width="2.500" height="3.500" fill="#e2e2e2" stroke="#c9c9c9" stroke-width=".5"/></g></svg>
<div class="t c1" style="top:323px;letter-spacing:-0.140px">Datum der</div>
<div class="t c1" style="top:336px;letter-spacing:-0.074px">Digitaldatengenerierung</div>
<div class="t c2" style="top:323px;letter-spacing:0.099px">2016-09-11 21:30:06</div>
<div class="t c3" style="top:323px">9004</div>
<div class="t c4" style="top:323px;letter-spacing:-0.239px">DateTimeDigitized</div>
<div class="t c5" style="top:323px;letter-spacing:0.011px">ASCII(20)</div>
<div class="hl" style="top:352px"></div>
<div class="t c1" style="top:357px;letter-spacing:-0.134px">Belichtungskorrektur</div>
<div class="t c2" style="top:357px;letter-spacing:0.139px">±0 LW</div>
<div class="t c3" style="top:357px">9204</div>
<div class="t c4" style="top:357px;letter-spacing:-0.282px">ExposureBiasValue</div>
<div class="t c5" style="top:357px;letter-spacing:-0.481px">SRATIONAL</div>
<div class="hl" style="top:373px"></div>
<svg class="abs" style="left:224px;top:376px" width="16" height="16" viewBox="0 0 16 16"><circle cx="8" cy="8" r="6.900" fill="url(#apg)"/><polygon points="11.19,9.16 8.59,11.35 5.40,10.19 4.81,6.84 7.41,4.65 10.60,5.81" fill="#fff"/><path d="M11.19 9.16L12.15 14.58M8.59 11.35L4.38 14.88M5.40 10.19L0.23 8.30M4.81 6.84L3.85 1.42M7.41 4.65L11.62 1.12M10.60 5.81L15.77 7.70" stroke="#fff" stroke-width="1.100" fill="none"/></svg>
<div class="t c1" style="top:378px;letter-spacing:-0.318px">Größtmögliche Blende</div>
<div class="t c2" style="top:378px;letter-spacing:0.063px">4 Av (F4)</div>
<div class="t c3" style="top:378px">9205</div>
<div class="t c4" style="top:378px;letter-spacing:-0.069px">MaxApertureValue</div>
<div class="t c5" style="top:378px;letter-spacing:-0.413px">RATIONAL</div>
<div class="hl" style="top:394px"></div>
<div class="t c1" style="top:399px;letter-spacing:-0.267px">Belichtungsmessmethode</div>
<div class="t c2" style="top:399px;letter-spacing:-0.010px">Spot</div>
<div class="t c3" style="top:399px">9207</div>
<div class="t c4" style="top:399px;letter-spacing:-0.177px">MeteringMode</div>
<div class="t c5" style="top:399px;letter-spacing:-0.862px">SHORT</div>
<div class="hl" style="top:415px"></div>
<div class="t c1" style="top:420px;letter-spacing:-0.227px">Lichtquelle</div>
<div class="t c2" style="top:420px;letter-spacing:-0.080px">Unbekannt</div>
<div class="t c3" style="top:420px">9208</div>
<div class="t c4" style="top:420px;letter-spacing:-0.229px">LightSource</div>
<div class="t c5" style="top:420px;letter-spacing:-0.862px">SHORT</div>
<div class="hl" style="top:436px"></div>
<svg class="abs" style="left:224px;top:439px" width="16" height="16" viewBox="0 0 16 16"><path d="M4.500 1.800H12.300L9.200 6.800H13.300L4 14L6.600 9.600H1.800z" fill="#f1c232"/><path d="M5.600 3.200H9.800L7.400 7.500H9.600L6 10.200L7.500 8.300H4z" fill="#fbe27a"/></svg>
<div class="t c1" style="top:441px;letter-spacing:-0.336px">Blitz</div>
<div class="t c2" style="top:441px;letter-spacing:-0.089px">Blitz wurde nicht ausgelöst, Automodus</div>
<div class="t c3" style="top:441px">9209</div>
<div class="t c4" style="top:441px;letter-spacing:-0.261px">Flash</div>
<div class="t c5" style="top:441px;letter-spacing:-0.862px">SHORT</div>
<div class="hl" style="top:457px"></div>
<div class="t c1" style="top:462px;letter-spacing:-0.115px">Brennweite</div>
<div class="t c2" style="top:462px;letter-spacing:-0.442px">300 mm</div>
<div class="t c3" style="top:462px">920A</div>
<div class="t c4" style="top:462px;letter-spacing:-0.186px">FocalLength</div>
<div class="t c5" style="top:462px;letter-spacing:-0.413px">RATIONAL</div>
<div class="hl" style="top:478px"></div>
<svg class="abs" style="left:224px;top:481px" width="16" height="16" viewBox="0 0 16 16"><rect x="2.500" y="1.500" width="11" height="12.300" rx=".6" fill="#fdfdfd" stroke="#cfcfcf"/><path d="M5 4.500h6M5 6.700h6M5 8.900h6M5 11h4.500" stroke="#c4c4c4" stroke-width=".9"/></svg>
<div class="t c1" style="top:483px;letter-spacing:-0.191px">Benutzerkommentar</div>
<div class="t c3" style="top:483px">9286</div>
<div class="t c4" style="top:483px;letter-spacing:-0.291px">UserComment</div>
<div class="t c5" style="top:483px;letter-spacing:-0.469px">UNDEFINED(125)</div>
<div class="hl" style="top:499px"></div>
<svg class="abs" style="left:224px;top:502px" width="16" height="16" viewBox="0 0 16 16"><circle cx="8" cy="8" r="6.300" fill="#fff" stroke="#d9a548" stroke-width="1.500"/><circle cx="8" cy="8" r="6.900" fill="none" stroke="#ecd09a" stroke-width=".5"/><circle cx="8" cy="8" r="4.500" fill="#e3eefc" stroke="#7d9fe0" stroke-width=".9"/><path d="M7.600 5.400V8.400L10.600 6.300" stroke="#5f6670" stroke-width="1.100" fill="none"/></svg>
<div class="t c1" style="top:504px;letter-spacing:-0.167px">DateTimeOriginal 1/100</div>
<div class="t c1" style="top:517px;letter-spacing:-0.306px">Sekunden</div>
<div class="t c2" style="top:504px;letter-spacing:0.934px">0"</div>
<div class="t c3" style="top:504px">9291</div>
<div class="t c4" style="top:504px;letter-spacing:-0.409px">SubSecTimeOriginal</div>
<div class="t c5" style="top:504px;letter-spacing:-0.048px">ASCII(3)</div>
<div class="hl" style="top:533px"></div>
<svg class="abs" style="left:224px;top:536px" width="16" height="16" viewBox="0 0 16 16"><circle cx="8" cy="8" r="6.300" fill="#fff" stroke="#d9a548" stroke-width="1.500"/><circle cx="8" cy="8" r="6.900" fill="none" stroke="#ecd09a" stroke-width=".5"/><circle cx="8" cy="8" r="4.500" fill="#e3eefc" stroke="#7d9fe0" stroke-width=".9"/><path d="M7.600 5.400V8.400L10.600 6.300" stroke="#5f6670" stroke-width="1.100" fill="none"/></svg>
<div class="t c1" style="top:538px;letter-spacing:-0.172px">DateTimeDigitized 1/100</div>
<div class="t c1" style="top:551px;letter-spacing:-0.306px">Sekunden</div>
<div class="t c2" style="top:538px;letter-spacing:0.934px">0"</div>
<div class="t c3" style="top:538px">9292</div>
<div class="t c4" style="top:538px;letter-spacing:-0.413px">SubSecTimeDigitized</div>
<div class="t c5" style="top:538px;letter-spacing:-0.048px">ASCII(3)</div>
<div class="hl" style="top:567px"></div>
<svg class="abs" style="left:224px;top:570px" width="16" height="16" viewBox="0 0 16 16"><path d="M7.500 2L13.300 4.800L7.700 7.700L2 4.800z" fill="#7fe9ee"/><path d="M2 4.800L7.700 7.700V14L2 10.800z" fill="#f6d93a"/><path d="M13.300 4.800L7.700 7.700V14L13.300 10.800z" fill="#ea5be3"/><path d="M7.700 7.700V14" stroke="#8a22c8" stroke-width="1.100"/><path d="M2 10.800L7.700 14L13.300 10.800" stroke="#7a5a2a" stroke-width=".7" fill="none" opacity=".7"/><path d="M2 4.800V10.800" stroke="#c9a51e" stroke-width=".7"/><path d="M13.300 4.800V10.800" stroke="#a52aa0" stroke-width=".7"/></svg>
<div class="t c1" style="top:572px;letter-spacing:-0.161px">Farbraum</div>
<div class="t c2" style="top:572px;letter-spacing:-1.111px">sRGB</div>
<div class="t c3" style="top:572px">A001</div>
<div class="t c4" style="top:572px;letter-spacing:-0.308px">ColorSpace</div>
<div class="t c5" style="top:572px;letter-spacing:-0.862px">SHORT</div>
<div class="hl" style="top:588px"></div>
<svg class="abs" style="left:224px;top:591px" width="16" height="16" viewBox="0 0 16 16"><path d="M2.500 4.500C2.500 1.500,4.500 1.600,8 1.600S13.500 1.500,13.500 4.500V14H2.500z" fill="#6f9fe8"/><path d="M2 4.500C2 1.200,4.500 1.200,8 1.200S14 1.200,14 4.500" fill="none" stroke="#a9c6f2" stroke-width=".8"/></svg>
<div class="t c1" style="top:593px">Bildbreite</div>
<div class="t c2" style="top:593px">2400 Pixel</div>
<div class="t c3" style="top:593px">A002</div>
<div class="t c4" style="top:593px">ExifImageWidth</div>
<div class="t c5" style="top:593px;letter-spacing:-0.862px">SHORT</div>
<div class="hl" style="top:609px"></div>
<div class="abs" style="left:363px;top:101px;width:434px;height:13px;background:#f9f9f9"></div>
<div class="t" style="left:460px;top:102px;letter-spacing:-0.084px">Dieser Bereich enthält nur ausgeblendete Felder.</div>
<div class="t" style="left:361.2px;top:115px;letter-spacing:-0.141px">Um diese Felder anzuzeigen, deaktivieren Sie die "Tag-Unterdrückung" im Optionen-Dialog.</div>
<div class="abs" style="left:953px;top:58px;width:1px;height:537px;background:#fafafa"></div>
<div class="abs" style="left:954px;top:58px;width:12px;height:537px;background:#fdfdfd"></div>
<div class="abs" style="left:954px;top:58px;width:12px;height:17px;background:#f0f0f0"></div>
<div class="abs" style="left:954px;top:578px;width:12px;height:17px;background:#f0f0f0"></div>
<div class="abs" style="left:954px;top:102px;width:12px;height:30px;background:#cdcdcd"></div>
<svg class="abs" style="left:954px;top:58px" width="12" height="17" viewBox="0 0 12 17"><path d="M4.400 11.200L8 7.600L11.600 11.200" fill="none" stroke="#4c4c4c" stroke-width="2.200"/></svg>
<svg class="abs" style="left:954px;top:578px" width="12" height="17" viewBox="0 0 12 17"><path d="M4.400 6.800L8 10.400L11.600 6.800" fill="none" stroke="#4c4c4c" stroke-width="2.200"/></svg>
<div class="abs" id="search"></div>
<svg class="abs" style="left:212px;top:602px" width="16" height="16" viewBox="0 0 16 16"><defs><linearGradient id="rx" x1="0" y1="0" x2="0" y2="1"><stop offset="0" stop-color="#f2795a"/><stop offset="1" stop-color="#cf3a1c"/></linearGradient></defs><rect x="1.500" y="1.500" width="14" height="14" rx="2" fill="#d9d6cf"/><rect x="1" y="1" width="14" height="14" rx="1.500" fill="url(#rx)"/><path d="M4.500 4.500L11.500 11.500M11.500 4.500L4.500 11.500" stroke="#fff" stroke-width="2.400"/></svg>
<div class="t" style="left:238.500px;top:603px;letter-spacing:-.3px">Suchen:</div>
<div class="abs" style="left:283px;top:601px;width:682px;height:18px;background:#fff;border:1px solid #c3c0b8;border-top-color:#aeaba3"></div>
</body></html>
